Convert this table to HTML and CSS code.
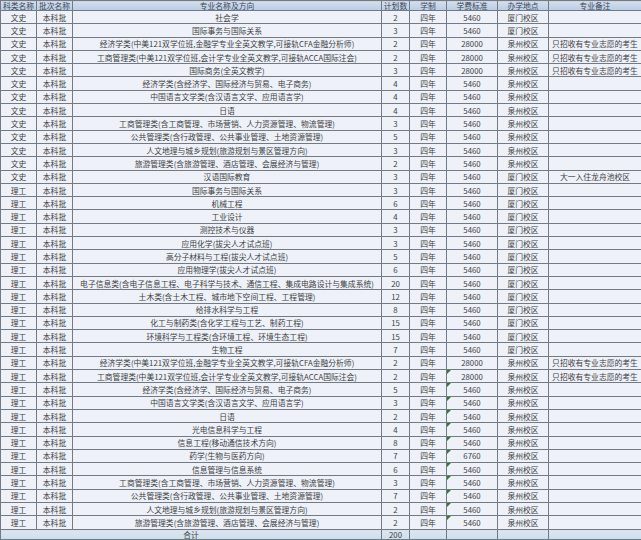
FILE: index.html
```html
<!DOCTYPE html>
<html lang="zh">
<head>
<meta charset="utf-8">
<title>招生计划</title>
<link rel="stylesheet" href="styles.css">
</head>
<body>
<table class="plan">
  <colgroup>
    <col class="c1"><col class="c2"><col class="c3"><col class="c4"><col class="c5"><col class="c6"><col class="c7"><col class="c8">
  </colgroup>
  <thead>
    <tr class="head">
      <th>科类名称</th><th>批次名称</th><th>专业名称及方向</th><th>计划数</th><th>学制</th><th>学费标准</th><th>办学地点</th><th>专业备注</th>
    </tr>
  </thead>
  <tbody>
    <tr><td>文史</td><td>本科批</td><td>社会学</td><td>2</td><td>四年</td><td>5460</td><td>厦门校区</td><td></td></tr>
    <tr><td>文史</td><td>本科批</td><td>国际事务与国际关系</td><td>3</td><td>四年</td><td>5460</td><td>厦门校区</td><td></td></tr>
    <tr><td>文史</td><td>本科批</td><td>经济学类(中美121双学位班,金融学专业全英文教学,可接轨CFA金融分析师)</td><td>2</td><td>四年</td><td>28000</td><td>泉州校区</td><td>只招收有专业志愿的考生</td></tr>
    <tr><td>文史</td><td>本科批</td><td>工商管理类(中美121双学位班,会计学专业全英文教学,可接轨ACCA国际注会)</td><td>2</td><td>四年</td><td>28000</td><td>泉州校区</td><td>只招收有专业志愿的考生</td></tr>
    <tr><td>文史</td><td>本科批</td><td>国际商务(全英文教学)</td><td>3</td><td>四年</td><td>28000</td><td>泉州校区</td><td>只招收有专业志愿的考生</td></tr>
    <tr><td>文史</td><td>本科批</td><td>经济学类(含经济学、国际经济与贸易、电子商务)</td><td>4</td><td>四年</td><td>5460</td><td>泉州校区</td><td></td></tr>
    <tr><td>文史</td><td>本科批</td><td>中国语言文学类(含汉语言文学、应用语言学)</td><td>4</td><td>四年</td><td>5460</td><td>泉州校区</td><td></td></tr>
    <tr><td>文史</td><td>本科批</td><td>日语</td><td>4</td><td>四年</td><td>5460</td><td>泉州校区</td><td></td></tr>
    <tr><td>文史</td><td>本科批</td><td>工商管理类(含工商管理、市场营销、人力资源管理、物流管理)</td><td>3</td><td>四年</td><td>5460</td><td>泉州校区</td><td></td></tr>
    <tr><td>文史</td><td>本科批</td><td>公共管理类(含行政管理、公共事业管理、土地资源管理)</td><td>5</td><td>四年</td><td>5460</td><td>泉州校区</td><td></td></tr>
    <tr><td>文史</td><td>本科批</td><td>人文地理与城乡规划(旅游规划与景区管理方向)</td><td>3</td><td>四年</td><td>5460</td><td>泉州校区</td><td></td></tr>
    <tr><td>文史</td><td>本科批</td><td>旅游管理类(含旅游管理、酒店管理、会展经济与管理)</td><td>2</td><td>四年</td><td>5460</td><td>泉州校区</td><td></td></tr>
    <tr><td>文史</td><td>本科批</td><td>汉语国际教育</td><td>3</td><td>四年</td><td>5460</td><td>厦门校区</td><td>大一入住龙舟池校区</td></tr>
    <tr><td>理工</td><td>本科批</td><td>国际事务与国际关系</td><td>3</td><td>四年</td><td>5460</td><td>厦门校区</td><td></td></tr>
    <tr><td>理工</td><td>本科批</td><td>机械工程</td><td>6</td><td>四年</td><td>5460</td><td>厦门校区</td><td></td></tr>
    <tr><td>理工</td><td>本科批</td><td>工业设计</td><td>4</td><td>四年</td><td>5460</td><td>厦门校区</td><td></td></tr>
    <tr><td>理工</td><td>本科批</td><td>测控技术与仪器</td><td>3</td><td>四年</td><td>5460</td><td>厦门校区</td><td></td></tr>
    <tr><td>理工</td><td>本科批</td><td>应用化学(拔尖人才试点班)</td><td>3</td><td>四年</td><td>5460</td><td>厦门校区</td><td></td></tr>
    <tr><td>理工</td><td>本科批</td><td>高分子材料与工程(拔尖人才试点班)</td><td>5</td><td>四年</td><td>5460</td><td>厦门校区</td><td></td></tr>
    <tr><td>理工</td><td>本科批</td><td>应用物理学(拔尖人才试点班)</td><td>6</td><td>四年</td><td>5460</td><td>厦门校区</td><td></td></tr>
    <tr><td>理工</td><td>本科批</td><td>电子信息类(含电子信息工程、电子科学与技术、通信工程、集成电路设计与集成系统)</td><td>20</td><td>四年</td><td>5460</td><td>厦门校区</td><td></td></tr>
    <tr><td>理工</td><td>本科批</td><td>土木类(含土木工程、城市地下空间工程、工程管理)</td><td>12</td><td>四年</td><td>5460</td><td>厦门校区</td><td></td></tr>
    <tr><td>理工</td><td>本科批</td><td>给排水科学与工程</td><td>8</td><td>四年</td><td>5460</td><td>厦门校区</td><td></td></tr>
    <tr><td>理工</td><td>本科批</td><td>化工与制药类(含化学工程与工艺、制药工程)</td><td>15</td><td>四年</td><td>5460</td><td>厦门校区</td><td></td></tr>
    <tr><td>理工</td><td>本科批</td><td>环境科学与工程类(含环境工程、环境生态工程)</td><td>15</td><td>四年</td><td>5460</td><td>厦门校区</td><td></td></tr>
    <tr><td>理工</td><td>本科批</td><td>生物工程</td><td>7</td><td>四年</td><td>5460</td><td>厦门校区</td><td></td></tr>
    <tr><td>理工</td><td>本科批</td><td>经济学类(中美121双学位班,金融学专业全英文教学,可接轨CFA金融分析师)</td><td>2</td><td>四年</td><td>28000</td><td>泉州校区</td><td>只招收有专业志愿的考生</td></tr>
    <tr><td>理工</td><td>本科批</td><td>工商管理类(中美121双学位班,会计学专业全英文教学,可接轨ACCA国际注会)</td><td>2</td><td>四年</td><td class="mark">28000</td><td>泉州校区</td><td>只招收有专业志愿的考生</td></tr>
    <tr><td>理工</td><td>本科批</td><td>经济学类(含经济学、国际经济与贸易、电子商务)</td><td>5</td><td>四年</td><td class="mark">5460</td><td>泉州校区</td><td></td></tr>
    <tr><td>理工</td><td>本科批</td><td>中国语言文学类(含汉语言文学、应用语言学)</td><td>3</td><td>四年</td><td class="mark">5460</td><td>泉州校区</td><td></td></tr>
    <tr><td>理工</td><td>本科批</td><td>日语</td><td>2</td><td>四年</td><td class="mark">5460</td><td>泉州校区</td><td></td></tr>
    <tr><td>理工</td><td>本科批</td><td>光电信息科学与工程</td><td>4</td><td>四年</td><td class="mark">5460</td><td>泉州校区</td><td></td></tr>
    <tr><td>理工</td><td>本科批</td><td>信息工程(移动通信技术方向)</td><td>8</td><td>四年</td><td class="mark">5460</td><td>泉州校区</td><td></td></tr>
    <tr><td>理工</td><td>本科批</td><td>药学(生物与医药方向)</td><td>7</td><td>四年</td><td class="mark">6760</td><td>泉州校区</td><td></td></tr>
    <tr><td>理工</td><td>本科批</td><td>信息管理与信息系统</td><td>6</td><td>四年</td><td class="mark">5460</td><td>泉州校区</td><td></td></tr>
    <tr><td>理工</td><td>本科批</td><td>工商管理类(含工商管理、市场营销、人力资源管理、物流管理)</td><td>3</td><td>四年</td><td class="mark">5460</td><td>泉州校区</td><td></td></tr>
    <tr><td>理工</td><td>本科批</td><td>公共管理类(含行政管理、公共事业管理、土地资源管理)</td><td>7</td><td>四年</td><td class="mark">5460</td><td>泉州校区</td><td></td></tr>
    <tr><td>理工</td><td>本科批</td><td>人文地理与城乡规划(旅游规划与景区管理方向)</td><td>2</td><td>四年</td><td class="mark">5460</td><td>泉州校区</td><td></td></tr>
    <tr><td>理工</td><td>本科批</td><td>旅游管理类(含旅游管理、酒店管理、会展经济与管理)</td><td>2</td><td>四年</td><td class="mark">5460</td><td>泉州校区</td><td></td></tr>
  </tbody>
  <tfoot>
    <tr class="total"><td colspan="3">合计</td><td>200</td><td></td><td></td><td></td><td></td></tr>
  </tfoot>
</table>
</body>
</html>
```

FILE: styles.css
```css
html, body {
  margin: 0;
  padding: 0;
  background: #eef1f8;
}

.plan {
  width: 641px;
  height: 540px;
  table-layout: fixed;
  border-collapse: collapse;
  font-family: "Noto Sans CJK SC", "Noto Sans", sans-serif;
  font-size: 7.8px;
  line-height: 9px;
  color: #3d3f44;
}

.c1 { width: 36px; }
.c2 { width: 36px; }
.c3 { width: 309px; }
.c4 { width: 28px; }
.c5 { width: 37px; }
.c6 { width: 51px; }
.c7 { width: 51px; }
.c8 { width: 93px; }

.plan th,
.plan td {
  padding: 0;
  border: 1px solid #747a84;
  text-align: center;
  vertical-align: middle;
  white-space: nowrap;
  overflow: hidden;
  font-weight: normal;
}

.plan td {
  background: #eef1f8;
}

.head th {
  background: linear-gradient(#d7dee7, #b7cde9);
  color: #3a4656;
}

.total td {
  background: linear-gradient(#dae6f1, #cfdeeb);
}

.mark {
  position: relative;
  border-left-color: #3b3f44;
}

.mark::before {
  content: "";
  position: absolute;
  left: 0;
  top: 0;
  border-top: 4px solid #2f7d2a;
  border-right: 4px solid transparent;
}
```
